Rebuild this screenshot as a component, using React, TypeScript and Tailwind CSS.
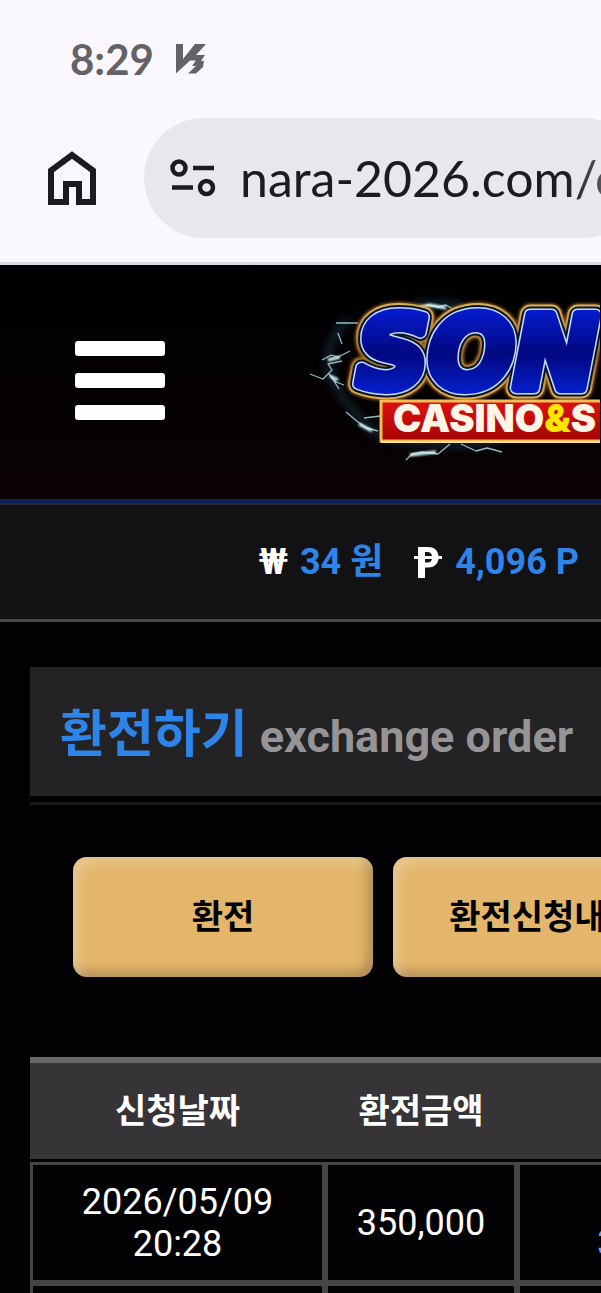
import React from "react";

function StatusMark() {
  return (
    <svg viewBox="0 0 32 30" className="h-[30px] w-8" fill="#646266" aria-hidden="true">
      <path d="M1 0H8V15L20 0H31L21 11H30L26 17H29L28 23L21 29.500H13L21 22H17L21 16.500H15L1 29.500Z" />
    </svg>
  );
}

function HomeIcon() {
  return (
    <svg viewBox="0 0 48 54" className="h-[54px] w-12" fill="none" stroke="#1c1b1f" strokeWidth="6" aria-hidden="true">
      <path d="M3 51V19.500L24 4L45 19.500V51H31V33H18V51Z" />
    </svg>
  );
}

function TuneIcon() {
  return (
    <svg viewBox="0 0 46 40" className="h-10 w-[46px]" fill="none" stroke="#1c1b1f" strokeWidth="4.500" aria-hidden="true">
      <circle cx="9" cy="10" r="6.500" />
      <path d="M23 10H44M2 29.500H23" />
      <circle cx="36.500" cy="29.500" r="6.500" />
    </svg>
  );
}

function PointMark() {
  return (
    <svg viewBox="0 0 30 32" className="h-8 w-[30px]" aria-hidden="true">
      <path
        fill="#fff"
        fillRule="evenodd"
        d="M5 1H15C21 1 25 4 25.500 10H29V13H25.500C24.500 18.500 21 21.500 15 21.500H12V32H5V13H1V10H5ZM12 6V10H19C18.500 7.500 17 6 14.500 6ZM12 13V16.500H14.500C17 16.500 18.500 15.500 19 13Z"
      />
    </svg>
  );
}

function Logo() {
  return (
    <svg viewBox="0 0 300 200" className="h-[200px] w-[300px] shrink-0" role="img" aria-label="SON CASINO&S">
      <defs>
        <linearGradient id="gold" x1="0" y1="0" x2="0" y2="1">
          <stop offset="0" stopColor="#e8bd68" />
          <stop offset="0.5" stopColor="#9a6424" />
          <stop offset="1" stopColor="#f7c45c" />
        </linearGradient>
        <linearGradient id="blue" x1="0" y1="0" x2="0" y2="1">
          <stop offset="0" stopColor="#0722e8" />
          <stop offset="0.5" stopColor="#020880" />
          <stop offset="1" stopColor="#0729f0" />
        </linearGradient>
        <linearGradient id="red" x1="0" y1="0" x2="0" y2="1">
          <stop offset="0" stopColor="#e01010" />
          <stop offset="1" stopColor="#a50505" />
        </linearGradient>
        <filter id="glow" x="-20%" y="-20%" width="140%" height="140%">
          <feGaussianBlur stdDeviation="4" />
        </filter>
        <filter id="soft" x="-20%" y="-20%" width="140%" height="140%">
          <feGaussianBlur stdDeviation="1.200" />
        </filter>
        <text id="word" x="57" y="108" fontFamily="'DejaVu Sans', sans-serif" fontWeight="700" fontStyle="italic" fontSize="100">
          SON
        </text>
      </defs>
      <g fill="none" stroke="#2a6580" strokeWidth="5" filter="url(#glow)" opacity="0.500">
        <path d="M48 40C25 60 20 90 45 120S70 155 100 160S170 167 200 160M115 24L160 24" />
      </g>
      <g fill="none" stroke="#b8e6ee" strokeWidth="1.300" strokeLinejoin="round" opacity="0.800">
        <path d="M118 28L127 25L138 27L146 25L153 29L166 29M77 27L79 34M36 43H58M38 53L42 64M22 80L31 75L38 77L44 74L50 71M10 94L23 99L32 90L28 84L42 81M29 94L36 102L44 105M32 98L39 109M46 132L58 142L67 148L78 151M64 138L80 136M106 180L112 174L122 172L138 174L150 164M161 164L176 171L187 168L202 172M286 32L297 28" />
      </g>
      <g fill="none" stroke="#dff" strokeWidth="3" filter="url(#soft)">
        <path d="M120 27L130 25L146 28M28 80L40 77M30 96L38 100M59 144L72 151M110 175L136 172" />
      </g>
      <g strokeLinejoin="round">
        <use href="#word" fill="#d68a22" stroke="#d68a22" strokeWidth="24" filter="url(#soft)" opacity="0.500" />
        <use href="#word" fill="url(#gold)" stroke="url(#gold)" strokeWidth="21" />
        <use href="#word" fill="#07142e" stroke="#07142e" strokeWidth="17" />
        <use href="#word" fill="#c7dcff" stroke="#c7dcff" strokeWidth="13" />
        <use href="#word" fill="url(#blue)" stroke="url(#blue)" strokeWidth="10" />
      </g>
      <rect x="81" y="121" width="240" height="40" fill="url(#red)" stroke="#f2bd56" strokeWidth="3" />
      <path d="M81 162H300" stroke="#ffe28a" strokeWidth="2" />
      <text x="93" y="152" fontFamily="Inter, sans-serif" fontWeight="900" fontSize="38" fill="#fff5e6">
        CASINO<tspan fill="#ffe600">&amp;</tspan>S
      </text>
    </svg>
  );
}

const rows = [
  { date: "2026/05/09 20:28", amount: "350,000", state: "3" },
  { date: "", amount: "", state: "" },
];

export default function App() {
  return (
    <div className="h-screen overflow-hidden bg-[#020103] font-['Roboto','Noto_Sans_CJK_KR',sans-serif] text-white">
      <div className="border-b-3 border-[#dcdade] bg-[#faf8fe] pb-6">
        <div className="flex h-[118px] items-center gap-[21px] pl-[70px] font-['Lato',sans-serif] text-[42px] font-bold text-[#646266]">
          <time>8:29</time>
          <StatusMark />
        </div>
        <div className="flex items-center">
          <button type="button" aria-label="Home" className="ml-12 mr-12 shrink-0">
            <HomeIcon />
          </button>
          <label className="flex h-[120px] w-[500px] shrink-0 items-center gap-6 rounded-full bg-[#e9e7ec] pl-[26px]">
            <TuneIcon />
            <input
              aria-label="Address"
              readOnly
              value="nara-2026.com/c"
              className="w-[380px] bg-transparent font-['Lato',sans-serif] text-[50px] leading-[60px] text-[#1c1b1f] outline-none [mask-image:linear-gradient(to_right,black_325px,#000a_370px)]"
            />
          </label>
        </div>
      </div>

      <header className="flex h-[238px] items-center overflow-hidden border-b-4 border-[#10205f] bg-linear-to-b from-[#010002] to-[#0b0202] pb-1 pl-[75px]">
        <button type="button" aria-label="Menu" className="mr-[135px] flex w-[90px] shrink-0 flex-col gap-[17px]">
          <span className="h-[15px] rounded-[3px] bg-white" />
          <span className="h-[15px] rounded-[3px] bg-white" />
          <span className="h-[15px] rounded-[3px] bg-white" />
        </button>
        <Logo />
      </header>

      <div className="flex h-[119px] items-center justify-end border-t-2 border-b-3 border-t-[#262629] border-b-[#48464a] bg-[#121113] pr-[22px] text-[36px] font-bold text-[#2d85ea]">
        <span className="mr-3 text-white">₩</span>
        <span className="mr-[30px]">34 원</span>
        <span className="mr-3">
          <PointMark />
        </span>
        <span>4,096 P</span>
      </div>

      <main className="pl-[30px] pt-[45px]">
        <div className="border-b-3 border-[#19181a] pb-[6px]">
          <h1 className="flex h-[129px] items-baseline gap-3 whitespace-nowrap bg-[#232224] pl-[30px] text-[51px] leading-[136px] font-bold text-[#2d85ea]">
            환전하기
            <small className="text-[45px] text-[#969497]">exchange order</small>
          </h1>
        </div>

        <nav className="flex gap-5 overflow-hidden pl-[43px] pt-[52px] text-[34px] font-bold text-black">
          <button type="button" className="h-[120px] w-[300px] shrink-0 rounded-[14px] bg-[#e3b66b] shadow-[inset_5px_5px_12px_#ffffff50,inset_-5px_-5px_12px_#00000040]">
            환전
          </button>
          <button type="button" className="h-[120px] w-[300px] shrink-0 rounded-[14px] bg-[#e3b66b] shadow-[inset_5px_5px_12px_#ffffff50,inset_-5px_-5px_12px_#00000040]">
            환전신청내역
          </button>
        </nav>

        <div className="mt-20 overflow-hidden">
          <table className="w-[667px] table-fixed border-separate border-spacing-0 text-center">
            <thead className="text-[34px]">
              <tr className="h-[105px]">
                <th className="w-[295px] border-t-6 border-b-3 border-t-[#69676a] border-b-[#020103] bg-[#363437] font-bold">신청날짜</th>
                <th className="w-[192px] border-t-6 border-b-3 border-t-[#69676a] border-b-[#020103] bg-[#363437] font-bold">환전금액</th>
                <th className="border-t-6 border-b-3 border-t-[#69676a] border-b-[#020103] bg-[#363437]" />
              </tr>
            </thead>
            <tbody className="text-[36px] leading-[42px]">
              {rows.map((row, i) => (
                <tr key={i} className="h-[121px]">
                  <td className="border-3 border-[#464447] px-10">{row.date}</td>
                  <td className="border-3 border-[#464447]">{row.amount}</td>
                  <td className="border-3 border-[#464447] pt-10 text-[#5aa9e6]">{row.state}</td>
                </tr>
              ))}
            </tbody>
          </table>
        </div>
      </main>
    </div>
  );
}
